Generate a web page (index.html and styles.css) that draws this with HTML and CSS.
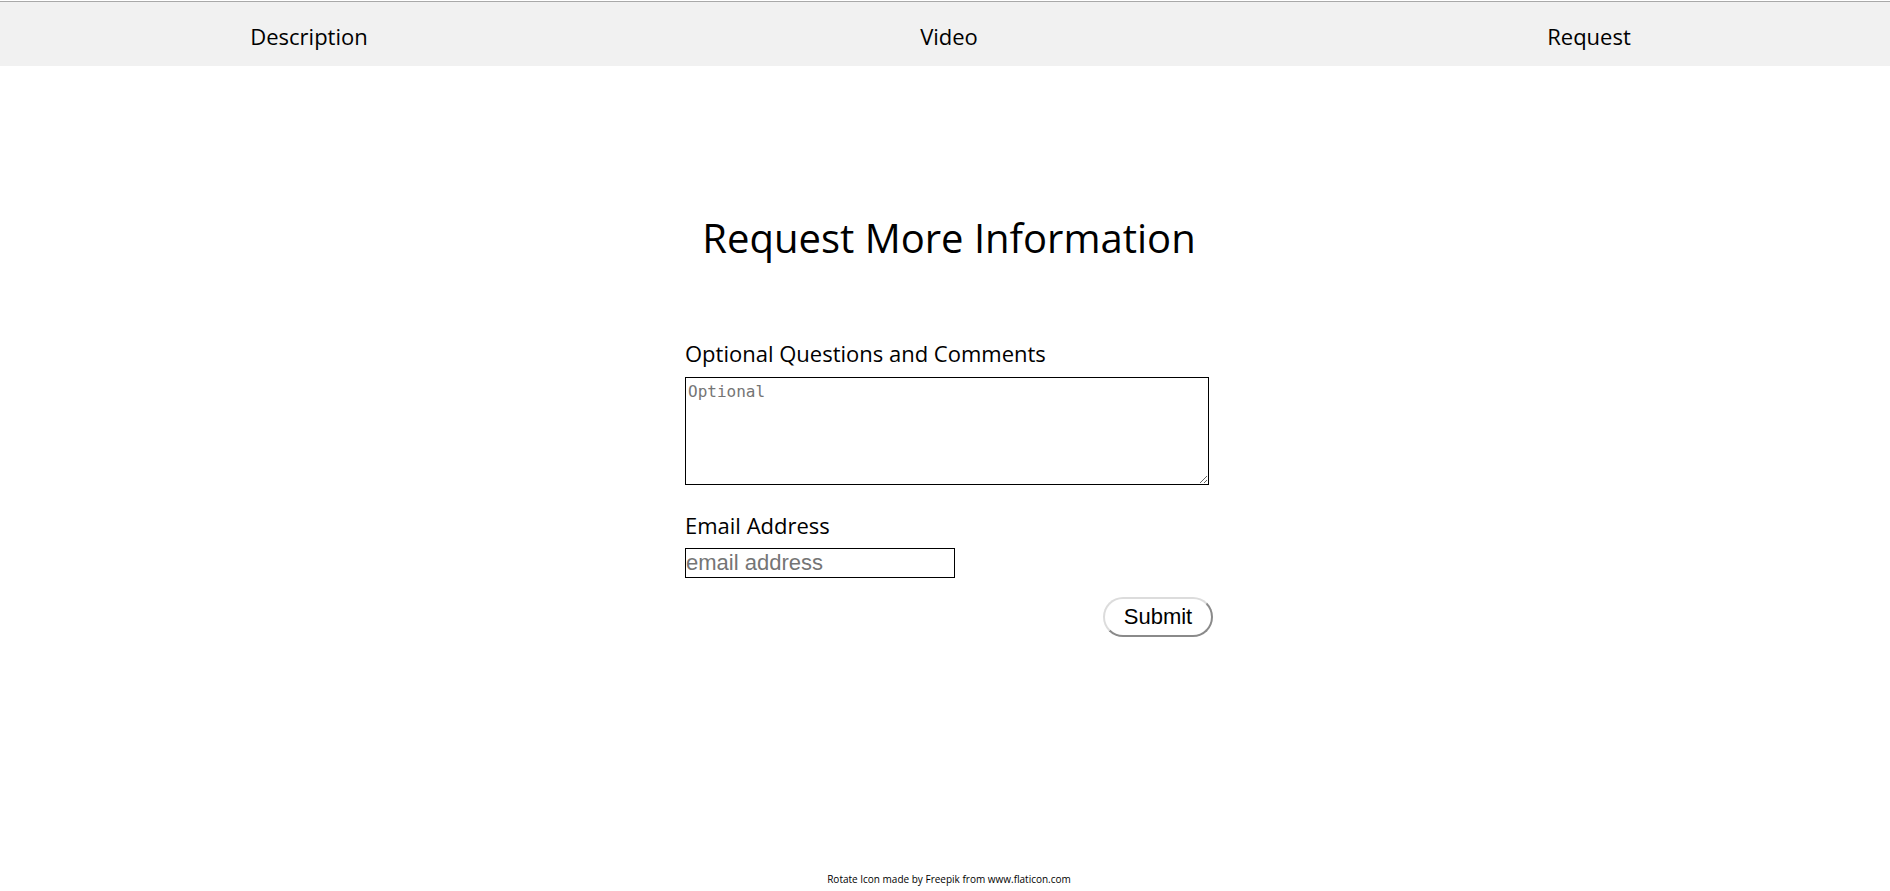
FILE: index.html
```html
<!DOCTYPE html>
<html lang="en">
<head>
<meta charset="utf-8">
<title>Request More Information</title>
<link rel="stylesheet" href="styles.css">
</head>
<body>
<nav class="topnav">
  <ul class="navlist">
    <li class="navitem">Description</li>
    <li class="navitem">Video</li>
    <li class="navitem">Request</li>
  </ul>
</nav>
<main class="content">
  <h1 class="title">Request More Information</h1>
  <form class="request-form">
    <label class="field-label" for="comments">Optional Questions and Comments</label>
    <textarea class="comments" id="comments" placeholder="Optional"></textarea>
    <label class="field-label email-label" for="email">Email Address</label>
    <input class="email" id="email" type="email" placeholder="email address">
    <button class="submit" type="button">Submit</button>
  </form>
</main>
<footer class="credit">Rotate Icon made by Freepik from www.flaticon.com</footer>
</body>
</html>
```

FILE: styles.css
```css
html, body {
  margin: 0;
  padding: 0;
}
body {
  font-family: "Open Sans", "Liberation Sans", sans-serif;
  color: #000;
  background: #fff;
  min-height: 100vh;
  display: flex;
  flex-direction: column;
}
.topnav {
  margin-top: 1px;
  border-top: 1px solid #a9a9a9;
  background: #f1f1f1;
  height: 64px;
  overflow: hidden;
}
.navlist {
  list-style: none;
  margin: 0 0 0 -11px;
  padding: 19px 0 0;
  display: grid;
  grid-template-columns: repeat(3, 640px);
}
.navitem {
  text-align: center;
  font-size: 22px;
  line-height: 30px;
}
.content {
  flex: 1;
  padding-left: 8px;
}
.title {
  margin: 145px 0 0;
  text-align: center;
  font-size: 40px;
  line-height: 54px;
  font-weight: 400;
}
.request-form {
  width: 528px;
  margin: 73px auto 0;
  display: flex;
  flex-direction: column;
  align-items: flex-start;
}
.field-label {
  font-size: 22px;
  line-height: 30px;
}
.email-label {
  margin-top: 25px;
}
.comments {
  box-sizing: border-box;
  margin: 9px 0 0;
  width: 524px;
  height: 108px;
  border: 1px solid #000;
  padding: 4px 2px;
  font-family: "DejaVu Sans Mono", "Liberation Mono", monospace;
  font-size: 16px;
}
.comments::placeholder {
  color: #757575;
}
.email {
  box-sizing: border-box;
  margin: 8px 0 0;
  width: 270px;
  height: 30px;
  border: 1px solid #000;
  padding: 0;
  font-family: "Liberation Sans", Arial, sans-serif;
  font-size: 22px;
}
.email::placeholder {
  color: #757575;
}
.submit {
  box-sizing: border-box;
  align-self: flex-end;
  margin: 19px 0 0;
  width: 110px;
  height: 40px;
  border: 2px solid;
  border-color: #dcdcdc #8a8a8a #8a8a8a #dcdcdc;
  border-radius: 20px;
  background: #fff;
  color: #000;
  font-family: "Liberation Sans", Arial, sans-serif;
  font-size: 22px;
  padding: 0;
}
.credit {
  text-align: center;
  padding-left: 8px;
  padding-bottom: 5px;
  font-size: 10px;
  line-height: 14px;
}
```
